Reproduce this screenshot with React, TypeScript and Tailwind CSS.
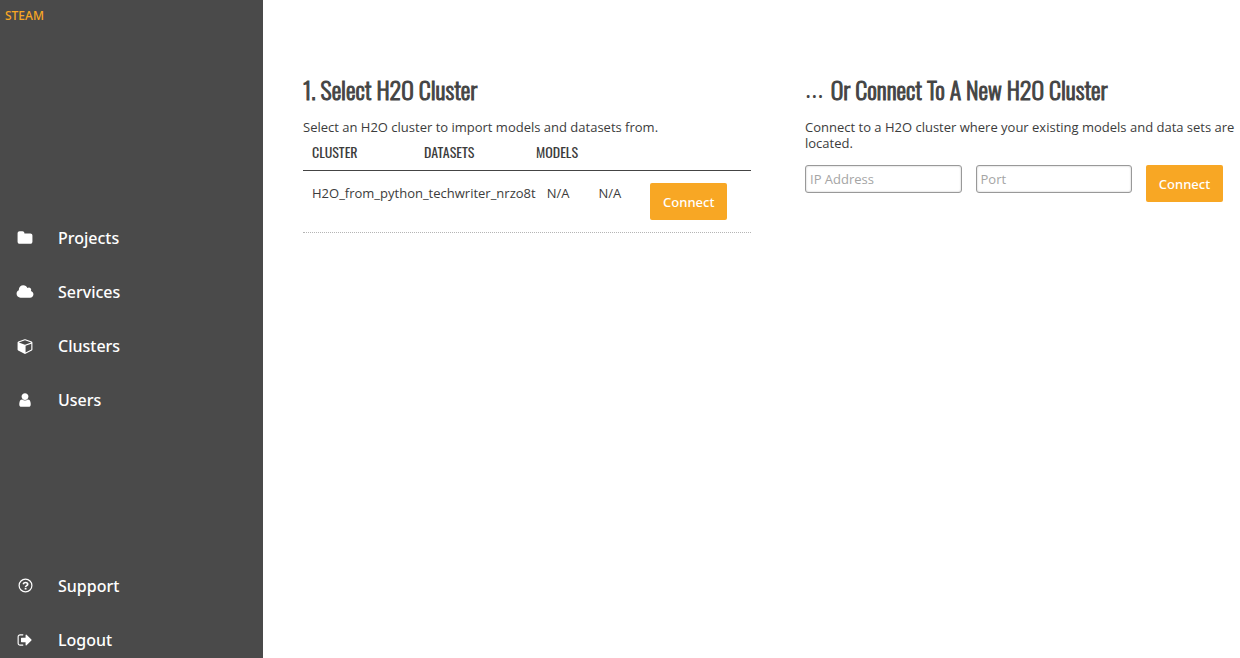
import type { ReactNode } from 'react';

function Glyph({ viewBox = '0 0 1792 1792', wide = false, children }: { viewBox?: string; wide?: boolean; children: ReactNode }) {
  return (
    <svg viewBox={viewBox} className={wide ? 'h-4 w-[18px]' : 'size-4'} fill="currentColor" aria-hidden="true">
      {children}
    </svg>
  );
}

const folder = (
  <Glyph>
    <path d="M1728 608v704q0 92-66 158t-158 66h-1216q-92 0-158-66t-66-158v-960q0-92 66-158t158-66h320q92 0 158 66t66 158v32h672q92 0 158 66t66 158z" />
  </Glyph>
);
const cloud = (
  <Glyph viewBox="0 0 2048 1792" wide>
    <path d="M1984 1152q0 159-112.5 271.5t-271.5 112.5h-1088q-185 0-316.5-131.5t-131.5-316.5q0-132 71-241.5t187-163.5q-2-28-2-43 0-212 150-362t362-150q158 0 286.5 88t187.5 230q70-62 166-62 106 0 181 75t75 181q0 75-41 138 129 30 213 134.5t84 239.5z" />
  </Glyph>
);
const cube = (
  <Glyph viewBox="-64 0 1792 1792">
    <path d="M896 1629l640-349v-636l-640 233v752zm-64-865l698-254-698-254-698 254zm832-252v768q0 35-18 65t-49 47l-704 384q-28 16-61 16t-61-16l-704-384q-31-17-49-47t-18-65v-768q0-40 23-73t61-47l704-256q22-8 44-8t44 8l704 256q38 14 61 47t23 73z" />
  </Glyph>
);
const user = (
  <Glyph>
    <path d="M1536 1399q0 109-62.5 187t-150.5 78h-854q-88 0-150.5-78t-62.5-187q0-85 8.5-160.5t31.5-152 58.5-131 94-89 134.5-34.5q131 128 313 128t313-128q76 0 134.5 34.5t94 89 58.5 131 31.5 152 8.5 160.5zm-256-887q0 159-112.5 271.5t-271.5 112.5-271.5-112.5-112.5-271.5 112.5-271.5 271.5-112.5 271.5 112.5 112.5 271.5z" />
  </Glyph>
);
const question = (
  <Glyph viewBox="0 0 16 16">
    <circle cx="8.5" cy="7.5" r="6.4" fill="none" stroke="currentColor" strokeWidth="1.2" />
    <path d="M6.2 6.2C6.6 5 7.4 4.5 8.5 4.5c1.2 0 2.2.7 2.2 1.7 0 1.5-2.1 1.4-2.1 2.8" fill="none" stroke="currentColor" strokeWidth="1.7" />
    <path d="M7.7 9.8h1.8v1.7H7.7z" />
  </Glyph>
);
const signOut = (
  <Glyph>
    <path d="M704 1440q0 4 1 20t.5 26.5-3 23.5-10 19.5-20.5 6.5h-320q-119 0-203.5-84.5t-84.5-203.5v-704q0-119 84.5-203.5t203.5-84.5h320q13 0 22.5 9.5t9.5 22.5q0 4 1 20t.5 26.5-3 23.5-10 19.5-20.5 6.5h-320q-66 0-113 47t-47 113v704q0 66 47 113t113 47h312l11.5 1 11.5 3 8 5.5 7 9 2 13.5zm928-544q0 26-19 45l-544 544q-19 19-45 19t-45-19-19-45v-288h-448q-26 0-45-19t-19-45v-384q0-26 19-45t45-19h448v-288q0-26 19-45t45-19 45 19l544 544q19 19 19 45z" />
  </Glyph>
);

function NavLink({ icon, label }: { icon: ReactNode; label: string }) {
  return (
    <li>
      <a href="#" className="flex items-center font-['Noto_Sans',sans-serif] text-base leading-[22px] font-medium text-white">
        <span className="flex w-[50px] justify-center">{icon}</span>
        <span className="pl-2">{label}</span>
      </a>
    </li>
  );
}

function ConnectButton() {
  return (
    <button
      type="button"
      className="h-[37px] w-[77px] shrink-0 rounded-xs bg-[#f8a724] font-['Noto_Sans',sans-serif] text-[13px] font-medium text-white"
    >
      Connect
    </button>
  );
}

function Heading({ children }: { children: ReactNode }) {
  return (
    <h2 className="flex gap-[7px] font-['Oswald',sans-serif] text-2xl leading-[30px] font-light whitespace-nowrap text-[#444] [-webkit-text-stroke:1px_#444]">
      {children}
    </h2>
  );
}

function Field({ label }: { label: string }) {
  return (
    <input
      type="text"
      aria-label={label}
      placeholder={label}
      className="h-7 w-full min-w-0 rounded-[3px] border border-[#999] px-1 text-[13px] shadow-[inset_0_0_2px_#bbb] placeholder:text-[#a5a5a5]"
    />
  );
}

export default function App() {
  return (
    <div className="flex min-h-screen bg-white font-['Open_Sans',sans-serif] text-[13px] leading-4 text-[#3c3c3c]">
      <aside className="flex w-[263px] shrink-0 flex-col bg-[#4a4a4a] pb-[7px]">
        <a href="#" className="h-8 px-[5px] pt-2 font-['Noto_Sans',sans-serif] text-xs leading-4 font-medium text-[#f8a724]">STEAM</a>
        <nav className="flex grow flex-col pt-[195px]">
          <ul className="flex flex-col gap-8">
            <NavLink icon={folder} label="Projects" />
            <NavLink icon={cloud} label="Services" />
            <NavLink icon={cube} label="Clusters" />
            <NavLink icon={user} label="Users" />
          </ul>
          <ul className="mt-auto flex flex-col gap-8">
            <NavLink icon={question} label="Support" />
            <NavLink icon={signOut} label="Logout" />
          </ul>
        </nav>
      </aside>

      <main className="grid min-w-0 grow grid-cols-[448fr_418fr] content-start gap-[54px] pt-[74px] pr-[17px] pl-10">
        <section>
          <Heading>1. Select H2O Cluster</Heading>
          <p className="mt-[15px]">Select an H2O cluster to import models and datasets from.</p>
          <table className="block">
            <thead className="block border-b border-[#444]">
              <tr className="grid grid-cols-4 pt-[9px] pb-[10px] text-left font-['Oswald',sans-serif] text-sm leading-4">
                <th className="pl-[9px] font-normal">CLUSTER</th>
                <th className="pl-[9px] font-normal">DATASETS</th>
                <th className="pl-[9px] font-normal">MODELS</th>
              </tr>
            </thead>
            <tbody className="block">
              <tr className="flex items-start border-b border-dotted border-[#b5b5b5] py-3 pl-[9px]">
                <td className="pt-[2px]">H2O_from_python_techwriter_nrzo8t</td>
                <td className="pt-[2px] pl-[11px]">N/A</td>
                <td className="pt-[2px] pl-[29px]">N/A</td>
                <td className="pl-[29px]"><ConnectButton /></td>
              </tr>
            </tbody>
          </table>
        </section>

        <section>
          <Heading>
            <span className="font-['Open_Sans',sans-serif] font-normal [-webkit-text-stroke:0]">…</span>
            <span>Or Connect To A New H2O Cluster</span>
          </Heading>
          <p className="-mr-[14px] mt-[15px]">Connect to a H2O cluster where your existing models and data sets are located.</p>
          <form className="mt-[14px] flex items-start gap-[14px]">
            <Field label="IP Address" />
            <Field label="Port" />
            <ConnectButton />
          </form>
        </section>
      </main>
    </div>
  );
}
